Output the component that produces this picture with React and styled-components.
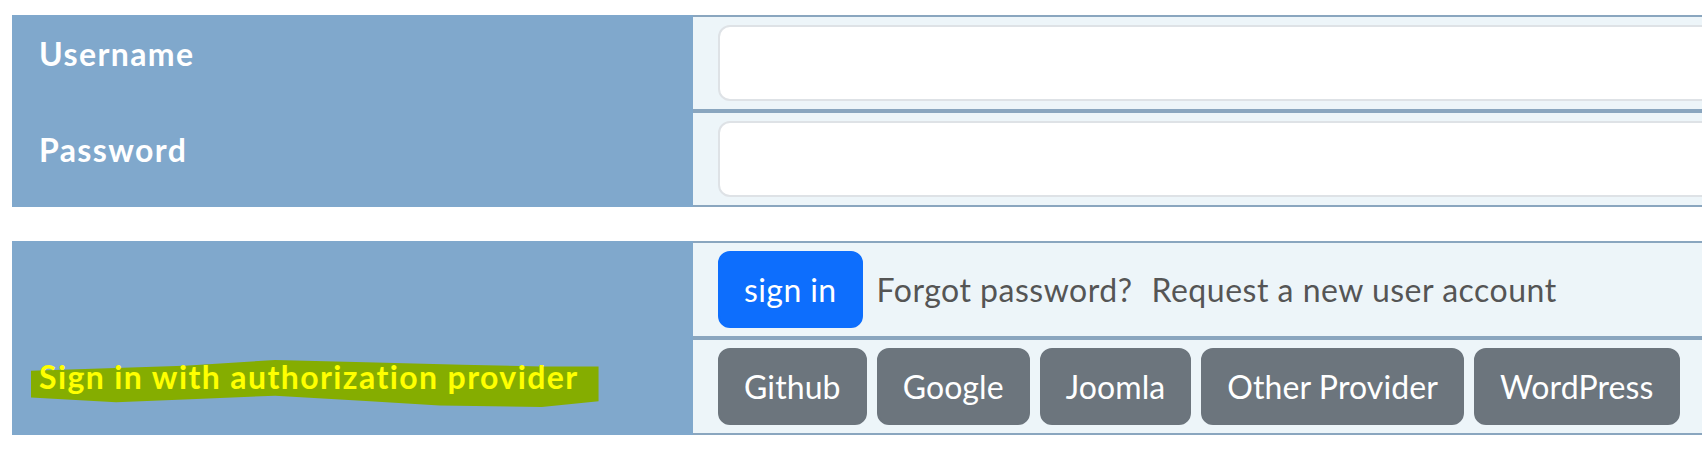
import React from "react";
import styled, { createGlobalStyle } from "styled-components";

const Global = createGlobalStyle`
  html, body { margin: 0; padding: 0; background: #ffffff; overflow: hidden; }
  body { font-family: Lato, "Open Sans", "DejaVu Sans", sans-serif; }
  * { box-sizing: border-box; }
`;

const Page = styled.div`
  padding: 15px 0 0 12px;
  width: 1800px;
  display: flex;
  flex-direction: column;
  gap: 34px;
`;

const FormTable = styled.div`
  display: grid;
  grid-template-columns: 681px 1fr;
`;

const HeadCell = styled.div`
  background: #80a8cc;
  border-top: 2px solid #80a8cc;
  border-bottom: 2px solid #80a8cc;
  padding: 13px 25px 8px 27px;
  color: #ffffff;
  font-weight: 700;
  font-size: 32px;
  line-height: 48px;
  letter-spacing: 1.4px;
`;

const DataCell = styled.div`
  background: #edf5f9;
  border-top: 2px solid #8aa6bf;
  border-bottom: 2px solid #8aa6bf;
  padding: 8px 25px;
  display: flex;
  align-items: center;
  gap: 10px;
`;

const TextInput = styled.input`
  width: 100%;
  height: 76px;
  border: 2px solid #dee2e6;
  border-radius: 12px;
  background: #ffffff;
  padding: 12px 24px;
  font: inherit;
  font-size: 32px;
  outline: none;
`;

const Button = styled.button`
  height: 77px;
  padding: 0 24px;
  border: 2px solid ${(p) => (p.$primary ? "#0d6efd" : "#6c757d")};
  background: ${(p) => (p.$primary ? "#0d6efd" : "#6c757d")};
  color: #ffffff;
  border-radius: 12px;
  font-family: inherit;
  font-size: 32px;
  line-height: 73px;
  letter-spacing: ${(p) => (p.$primary ? "0.4px" : "0.1px")};
  white-space: nowrap;
  cursor: pointer;
`;

const TextLink = styled.a`
  color: #555555;
  font-size: 32px;
  line-height: 48px;
  letter-spacing: 0.5px;
  text-decoration: none;
  white-space: nowrap;
  margin-left: ${(p) => p.$space}px;
`;

const Highlight = styled.span`
  position: relative;
  display: inline-block;
  color: #ffff00;
  isolation: isolate;
  white-space: nowrap;

  &::before {
    content: "";
    position: absolute;
    top: 7px;
    bottom: -6px;
    left: -8px;
    right: -20px;
    background: #85ad00;
    z-index: -1;
    clip-path: polygon(
      0% 23%, 27% 12%, 43% 0%, 59% 5%, 76% 10%, 90% 14%, 100% 14%,
      100% 88%, 90% 100%, 72% 97%, 59% 87%, 43% 76%, 27% 84%, 15% 90%, 0% 80%
    );
  }
`;

const Spacer = styled.div`
  width: 6px;
`;

export default function App() {
  const providers = ["Github", "Google", "Joomla", "Other Provider", "WordPress"];
  return (
    <>
      <Global />
      <Page>
        <FormTable>
          <HeadCell>Username</HeadCell>
          <DataCell>
            <TextInput type="text" />
          </DataCell>
          <HeadCell>Password</HeadCell>
          <DataCell>
            <TextInput type="password" />
          </DataCell>
        </FormTable>

        <FormTable>
          <HeadCell />
          <DataCell>
            <Button $primary>sign in</Button>
            <TextLink $space={4}>Forgot password?</TextLink>
            <TextLink $space={9}>Request a new user account</TextLink>
          </DataCell>
          <HeadCell>
            <Highlight>Sign in with authorization provider</Highlight>
          </HeadCell>
          <DataCell>
            {providers.map((p) => (
              <Button key={p}>{p}</Button>
            ))}
            <Spacer />
          </DataCell>
        </FormTable>
      </Page>
    </>
  );
}
